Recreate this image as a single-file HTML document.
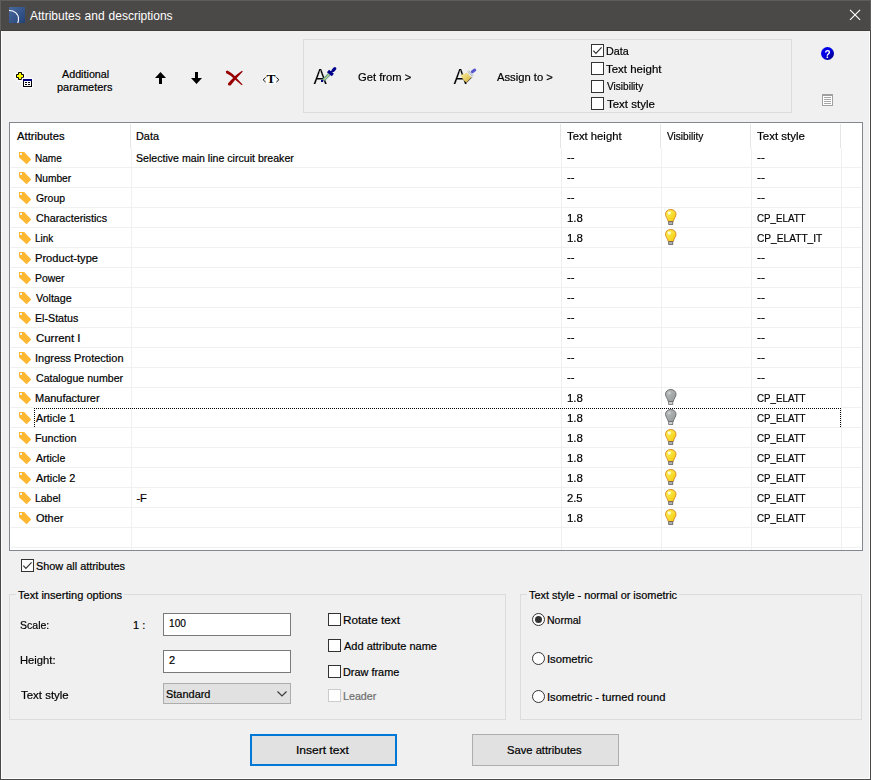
<!DOCTYPE html>
<html><head><meta charset="utf-8"><title>Attributes and descriptions</title>
<style>
html,body{margin:0;padding:0;}
body{width:871px;height:780px;overflow:hidden;background:#f0f0f0;font-family:"Liberation Sans",sans-serif;font-size:11px;color:#000;position:relative;}
.win{position:absolute;left:0;top:0;width:869px;height:778px;border:1px solid #4b4947;background:#f0f0f0;}
.win::after{content:"";position:absolute;left:0;top:0;width:867px;height:776px;border:1px solid #fcfcfc;}
.title{position:absolute;left:0;top:0;width:869px;height:29px;background:#4b4947;border:1px solid #5f5d5b;border-bottom:1px solid #403e3c;}
.title .cap{position:absolute;left:29px;top:7px;word-spacing:0.6px;font-size:12px;line-height:16px;color:#fff;white-space:nowrap;}
.t{position:absolute;white-space:nowrap;line-height:13px;height:13px;transform-origin:0 0;-webkit-text-stroke:0.2px currentColor;}
.gb{position:absolute;border:1px solid #dcdcdc;box-sizing:border-box;}
.lg{position:absolute;background:#f0f0f0;height:13px;}
.cb{position:absolute;width:11px;height:11px;border:1px solid #333;background:#fff;}
.cb.dis{border-color:#ccc;}
.rb{position:absolute;width:11px;height:11px;border:1px solid #333;background:#fff;border-radius:50%;}
.rb.on::after{content:"";position:absolute;left:2px;top:2px;width:7px;height:7px;border-radius:50%;background:#333;}
.list{position:absolute;left:9px;top:122px;width:852px;height:427px;border:1px solid #828790;background:#fff;}
.hl{position:absolute;background:#f0f0f0;}
.hd{position:absolute;background:#e5e5e5;width:1px;top:124px;height:24px;}
.inp{position:absolute;box-sizing:border-box;border:1px solid #7a7a7a;background:#fff;}
.sel{position:absolute;box-sizing:border-box;border:1px solid #adadad;background:#e1e1e1;}
.btn{position:absolute;box-sizing:border-box;background:#e1e1e1;border:1px solid #adadad;}
.btn.def{border:2px solid #0078d7;}
svg{position:absolute;overflow:visible;}
</style></head>
<body>
<div class="win"></div>
<svg width="0" height="0" style="left:0;top:0"><defs><linearGradient id="by" x1="0" y1="0" x2="1" y2="1"><stop offset="0" stop-color="#fff46a"/><stop offset="1" stop-color="#f2c800"/></linearGradient><linearGradient id="bgy" x1="0" y1="0" x2="1" y2="1"><stop offset="0" stop-color="#bcc0c0"/><stop offset="1" stop-color="#939797"/></linearGradient></defs></svg>
<div class="title">
<svg style="left:8px;top:6px" width="16" height="16" viewBox="0 0 16 16"><defs><linearGradient id="ig" x1="0" y1="0" x2="1" y2="1"><stop offset="0" stop-color="#4a6a9e"/><stop offset="1" stop-color="#22427a"/></linearGradient></defs><rect width="16" height="16" fill="url(#ig)"/><path d="M0 3.5 C5 3.3 9.6 6.5 9.5 12 C9.5 14 9.3 15 8.6 16" fill="none" stroke="#fff" stroke-width="1.1"/></svg>
<div class="cap">Attributes and descriptions</div>
<svg style="left:849px;top:9px" width="11" height="11" viewBox="0 0 11 11"><path d="M0 -0.2 L10.1 9.9 M10.1 -0.2 L0 9.9" stroke="#fff" stroke-width="1.15" fill="none"/></svg>
</div>
<svg style="left:15px;top:71px" width="19" height="18" viewBox="0 0 19 18"><path d="M3.5 0.5h3v3h3v3h-3v3h-3v-3h-3v-3h3z" fill="#ff0" stroke="#fafafa" stroke-width="2.4"/><path d="M3.5 1.5h3v2h2v3h-2v2h-3v-2h-2v-3h2z" fill="#ff0" stroke="#000" stroke-width="1"/><rect x="7.5" y="7.5" width="10" height="9" fill="#fff" stroke="#fafafa" stroke-width="1.4"/><rect x="8.5" y="8.5" width="8" height="7" fill="#fff" stroke="#000" stroke-width="1"/><rect x="8" y="8" width="9" height="2" fill="#000080"/><rect x="10" y="11" width="2" height="1" fill="#000"/><rect x="13" y="11" width="2" height="1" fill="#000"/><rect x="10" y="13" width="2" height="1" fill="#000"/><rect x="13" y="13" width="2" height="1" fill="#000"/></svg>
<div class="t " id="t0" style="left:62.11px;top:68px;transform:scaleX(0.977);">Additional</div>
<div class="t " id="t1" style="left:56.95px;top:81px;transform:scaleX(0.9956);">parameters</div>
<svg style="left:155px;top:72px" width="11" height="12" viewBox="0 0 11 12"><path d="M5.5 0 L11 6 H7 V12 H4 V6 H0 Z" fill="#000"/></svg>
<svg style="left:191px;top:72px" width="11" height="12" viewBox="0 0 11 12"><path d="M5.5 12 L11 6 H7 V0 H4 V6 H0 Z" fill="#000"/></svg>
<svg style="left:226px;top:71px" width="17" height="15" viewBox="0 0 17 15"><path d="M-0.2 0.3 L1.4 -0.4 C4.8 1.4 7.6 3.6 9.8 6.2 L16.6 13.4 L15.8 14.3 L8.6 8.2 C6 5.6 3.5 3.6 0.2 2.2 Z" fill="#990000"/><path d="M16 -0.2 L16.8 0.6 C13.4 4.2 10 7.8 7.2 11.2 L5 14 C3.8 15.2 1.4 14.6 2 12.6 L4.6 9.6 C8 6 11.6 2.6 16 -0.2 Z" fill="#990000"/></svg>
<svg style="left:262px;top:70px" width="18" height="16" viewBox="0 0 18 16"><rect x="4" y="3" width="10" height="11" rx="1.5" fill="#fff"/><text x="9" y="13" text-anchor="middle" font-family="Liberation Serif,serif" font-weight="bold" font-size="13.5" fill="#000">T</text><path d="M3.6 7.4 L1.1 9.75 L3.6 12.1 M14.4 7.4 L16.9 9.75 L14.4 12.1" stroke="#000" stroke-width="0.9" fill="none"/></svg>
<div class="gb" style="left:303px;top:39px;width:489px;height:74px"></div>
<svg style="left:312px;top:64px" width="28" height="24" viewBox="0 0 28 24"><text x="1.4" y="20" font-family="Liberation Sans,sans-serif" font-size="22" fill="#000" stroke="#f0f0f0" stroke-width="0.15" textLength="13.4" lengthAdjust="spacingAndGlyphs" style="will-change:transform">A</text><path d="M17.2 10.3 L11.6 15.9" stroke="#5f9a9a" stroke-width="3.2"/><path d="M16.8 10.7 L11.8 15.7" stroke="#ffff70" stroke-width="1.1" stroke-dasharray="1 0.5"/><rect x="9" y="16" width="2.2" height="2" fill="#000080"/><path d="M16 7 L20.8 11" stroke="#00008b" stroke-width="3.4"/><path d="M18.5 9 L20.5 7" stroke="#00008b" stroke-width="1.8"/><path d="M21.2 6.3 L22.8 4.7" stroke="#00008b" stroke-width="3.1" stroke-linecap="round"/></svg>
<div class="t " id="t2" style="left:358.24px;top:71px;transform:scaleX(1.018);">Get from &gt;</div>
<svg style="left:452px;top:64px" width="28" height="24" viewBox="0 0 28 24"><text x="1.4" y="20" font-family="Liberation Sans,sans-serif" font-size="22" fill="#000" stroke="#f0f0f0" stroke-width="0.15" textLength="13.4" lengthAdjust="spacingAndGlyphs" style="will-change:transform">A</text><defs><linearGradient id="bg1" x1="0" y1="0" x2="1" y2="1"><stop offset="0" stop-color="#faefb0"/><stop offset="0.6" stop-color="#e6cd62"/><stop offset="1" stop-color="#b8952c"/></linearGradient></defs><path d="M8 11.3 L10.2 10.9 L10.8 9.6 L12.6 9.9 L14.6 8.2 L19.6 13.4 L14.4 18.5 L12 16.4 L9.8 13.6 Z" fill="url(#bg1)"/><path d="M14.6 8.2 L17.2 6 L21.8 10.8 L19.6 13.4 Z" fill="#e4e7ee"/><path d="M15.6 7.4 L20.4 12.4 M16.6 6.6 L21.2 11.5" stroke="#8f96a3" stroke-width="0.6"/><path d="M20.4 7.7 L22.7 6.1" stroke="#5757d0" stroke-width="3.1" stroke-linecap="round"/><path d="M19.8 13.4 L14.5 18.7" stroke="#4a4436" stroke-width="0.9"/></svg>
<div class="t " id="t3" style="left:496.59px;top:71px;transform:scaleX(1.0219);">Assign to &gt;</div>
<div class="cb" style="left:591px;top:44px"></div>
<svg style="left:591px;top:44px" width="13" height="13" viewBox="0 0 13 13"><path d="M2.3 6.6 L4.9 9.3 L10.6 3.4" stroke="#333" stroke-width="1.2" fill="none"/></svg>
<div class="t " id="t4" style="left:606.3px;top:45px;transform:scaleX(0.9772);">Data</div>
<div class="cb" style="left:591px;top:62px"></div>
<div class="t " id="t5" style="left:606.41px;top:63px;transform:scaleX(1.0424);">Text height</div>
<div class="cb" style="left:591px;top:80px"></div>
<div class="t " id="t6" style="left:607.47px;top:80px;transform:scaleX(0.9155);">Visibility</div>
<div class="cb" style="left:591px;top:97px"></div>
<div class="t " id="t7" style="left:607.41px;top:98px;transform:scaleX(1.0433);">Text style</div>
<svg style="left:821px;top:47px" width="13" height="13" viewBox="0 0 13 13"><defs><linearGradient id="hg" x1="0" y1="0" x2="1" y2="1"><stop offset="0.45" stop-color="#0000e8"/><stop offset="1" stop-color="#000070"/></linearGradient></defs><circle cx="6.5" cy="6.5" r="6.5" fill="url(#hg)"/><text x="6.6" y="10.5" text-anchor="middle" font-family="Liberation Sans,sans-serif" font-weight="bold" font-size="10" fill="#fff" style="will-change:transform">?</text></svg>
<svg style="left:822px;top:94px" width="11" height="12" viewBox="0 0 11 12"><rect x="0.5" y="0.5" width="10" height="11" fill="#fff" stroke="#a0a0a0"/><rect x="0" y="0" width="11" height="2" fill="#a0a0a0"/><path d="M2 3.5h7M2 5.5h7M2 7.5h7M2 9.5h7" stroke="#a8a8a8" stroke-width="1"/></svg>
<div class="list"></div>
<div class="hl" style="left:131px;top:148px;width:1px;height:402px"></div>
<div class="hl" style="left:561px;top:148px;width:1px;height:402px"></div>
<div class="hl" style="left:661px;top:148px;width:1px;height:402px"></div>
<div class="hl" style="left:751px;top:148px;width:1px;height:402px"></div>
<div class="hl" style="left:841px;top:148px;width:1px;height:402px"></div>
<div class="hd" style="left:130px"></div>
<div class="hd" style="left:560px"></div>
<div class="hd" style="left:660px"></div>
<div class="hd" style="left:750px"></div>
<div class="hd" style="left:840px"></div>
<div class="hl" style="left:11px;top:167px;width:850px;height:1px"></div>
<div class="hl" style="left:11px;top:187px;width:850px;height:1px"></div>
<div class="hl" style="left:11px;top:207px;width:850px;height:1px"></div>
<div class="hl" style="left:11px;top:227px;width:850px;height:1px"></div>
<div class="hl" style="left:11px;top:247px;width:850px;height:1px"></div>
<div class="hl" style="left:11px;top:267px;width:850px;height:1px"></div>
<div class="hl" style="left:11px;top:287px;width:850px;height:1px"></div>
<div class="hl" style="left:11px;top:307px;width:850px;height:1px"></div>
<div class="hl" style="left:11px;top:327px;width:850px;height:1px"></div>
<div class="hl" style="left:11px;top:347px;width:850px;height:1px"></div>
<div class="hl" style="left:11px;top:367px;width:850px;height:1px"></div>
<div class="hl" style="left:11px;top:387px;width:850px;height:1px"></div>
<div class="hl" style="left:11px;top:407px;width:850px;height:1px"></div>
<div class="hl" style="left:11px;top:427px;width:850px;height:1px"></div>
<div class="hl" style="left:11px;top:447px;width:850px;height:1px"></div>
<div class="hl" style="left:11px;top:467px;width:850px;height:1px"></div>
<div class="hl" style="left:11px;top:487px;width:850px;height:1px"></div>
<div class="hl" style="left:11px;top:507px;width:850px;height:1px"></div>
<div class="hl" style="left:11px;top:527px;width:850px;height:1px"></div>
<div class="hl" style="left:11px;top:547px;width:850px;height:1px"></div>
<div class="t " id="t8" style="left:16.56px;top:130px;transform:scaleX(1.0224);">Attributes</div>
<div class="t " id="t9" style="left:135.96px;top:130px;transform:scaleX(0.9872);">Data</div>
<div class="t " id="t10" style="left:566.87px;top:130px;transform:scaleX(1.0255);">Text height</div>
<div class="t " id="t11" style="left:667.46px;top:130px;transform:scaleX(0.9181);">Visibility</div>
<div class="t " id="t12" style="left:757.47px;top:130px;transform:scaleX(1.0453);">Text style</div>
<svg style="left:19px;top:152px" width="13" height="13" viewBox="0 0 13 13"><path d="M0 0 L5.2 0 L12.2 7.4 L7.6 12.2 L0 5.2 Z" fill="#fdb730"/><rect x="1" y="1" width="2" height="2" fill="#eef3fb"/></svg>
<div class="t " id="t13" style="left:35.48px;top:152px;transform:scaleX(0.9118);">Name</div>
<div class="t " id="t14" style="left:136.23px;top:152px;transform:scaleX(0.9633);">Selective main line circuit breaker</div>
<div class="t " id="t15" style="left:567.16px;top:151px;transform:scaleX(1.0315);">--</div>
<div class="t " id="t16" style="left:757.35px;top:151px;transform:scaleX(1.0619);">--</div>
<svg style="left:19px;top:172px" width="13" height="13" viewBox="0 0 13 13"><path d="M0 0 L5.2 0 L12.2 7.4 L7.6 12.2 L0 5.2 Z" fill="#fdb730"/><rect x="1" y="1" width="2" height="2" fill="#eef3fb"/></svg>
<div class="t " id="t17" style="left:35.41px;top:172px;transform:scaleX(0.9244);">Number</div>
<div class="t " id="t18" style="left:567.16px;top:171px;transform:scaleX(1.03);">--</div>
<div class="t " id="t19" style="left:756.79px;top:171px;transform:scaleX(1.0811);">--</div>
<svg style="left:19px;top:192px" width="13" height="13" viewBox="0 0 13 13"><path d="M0 0 L5.2 0 L12.2 7.4 L7.6 12.2 L0 5.2 Z" fill="#fdb730"/><rect x="1" y="1" width="2" height="2" fill="#eef3fb"/></svg>
<div class="t " id="t20" style="left:35.67px;top:192px;transform:scaleX(0.9482);">Group</div>
<div class="t " id="t21" style="left:567.16px;top:191px;transform:scaleX(1.03);">--</div>
<div class="t " id="t22" style="left:756.79px;top:191px;transform:scaleX(1.0811);">--</div>
<svg style="left:19px;top:212px" width="13" height="13" viewBox="0 0 13 13"><path d="M0 0 L5.2 0 L12.2 7.4 L7.6 12.2 L0 5.2 Z" fill="#fdb730"/><rect x="1" y="1" width="2" height="2" fill="#eef3fb"/></svg>
<div class="t " id="t23" style="left:35.67px;top:212px;transform:scaleX(0.9777);">Characteristics</div>
<div class="t " id="t24" style="left:567.48px;top:212px;transform:scaleX(1.0399);">1.8</div>
<svg style="left:665px;top:209px" width="12" height="16" viewBox="0 0 12 16"><path d="M5.75 0.5 C2.5 0.5 0.5 2.8 0.5 5.3 C0.5 7.5 2.6 9.5 3.3 12.5 L8.2 12.5 C8.9 9.5 11 7.5 11 5.3 C11 2.8 9 0.5 5.75 0.5 Z" fill="url(#by)" stroke="#e08a1e" stroke-width="1"/><circle cx="4.3" cy="4" r="1.6" fill="#fffbe0"/><rect x="3.7" y="12.7" width="4.1" height="2.7" fill="#b4b4b4" stroke="#5a5a5a" stroke-width="0.8"/></svg>
<div class="t " id="t25" style="left:757.29px;top:212px;transform:scaleX(0.8859);">CP_ELATT</div>
<svg style="left:19px;top:232px" width="13" height="13" viewBox="0 0 13 13"><path d="M0 0 L5.2 0 L12.2 7.4 L7.6 12.2 L0 5.2 Z" fill="#fdb730"/><rect x="1" y="1" width="2" height="2" fill="#eef3fb"/></svg>
<div class="t " id="t26" style="left:34.6px;top:232px;transform:scaleX(0.9003);">Link</div>
<div class="t " id="t27" style="left:567.48px;top:232px;transform:scaleX(1.0399);">1.8</div>
<svg style="left:665px;top:229px" width="12" height="16" viewBox="0 0 12 16"><path d="M5.75 0.5 C2.5 0.5 0.5 2.8 0.5 5.3 C0.5 7.5 2.6 9.5 3.3 12.5 L8.2 12.5 C8.9 9.5 11 7.5 11 5.3 C11 2.8 9 0.5 5.75 0.5 Z" fill="url(#by)" stroke="#e08a1e" stroke-width="1"/><circle cx="4.3" cy="4" r="1.6" fill="#fffbe0"/><rect x="3.7" y="12.7" width="4.1" height="2.7" fill="#b4b4b4" stroke="#5a5a5a" stroke-width="0.8"/></svg>
<div class="t " id="t28" style="left:756.72px;top:232px;transform:scaleX(0.9233);">CP_ELATT_IT</div>
<svg style="left:19px;top:252px" width="13" height="13" viewBox="0 0 13 13"><path d="M0 0 L5.2 0 L12.2 7.4 L7.6 12.2 L0 5.2 Z" fill="#fdb730"/><rect x="1" y="1" width="2" height="2" fill="#eef3fb"/></svg>
<div class="t " id="t29" style="left:34.62px;top:252px;transform:scaleX(1.0109);">Product-type</div>
<div class="t " id="t30" style="left:567.16px;top:251px;transform:scaleX(1.03);">--</div>
<div class="t " id="t31" style="left:756.79px;top:251px;transform:scaleX(1.0811);">--</div>
<svg style="left:19px;top:272px" width="13" height="13" viewBox="0 0 13 13"><path d="M0 0 L5.2 0 L12.2 7.4 L7.6 12.2 L0 5.2 Z" fill="#fdb730"/><rect x="1" y="1" width="2" height="2" fill="#eef3fb"/></svg>
<div class="t " id="t32" style="left:35.27px;top:272px;transform:scaleX(0.9454);">Power</div>
<div class="t " id="t33" style="left:567.16px;top:271px;transform:scaleX(1.03);">--</div>
<div class="t " id="t34" style="left:756.79px;top:271px;transform:scaleX(1.0811);">--</div>
<svg style="left:19px;top:292px" width="13" height="13" viewBox="0 0 13 13"><path d="M0 0 L5.2 0 L12.2 7.4 L7.6 12.2 L0 5.2 Z" fill="#fdb730"/><rect x="1" y="1" width="2" height="2" fill="#eef3fb"/></svg>
<div class="t " id="t35" style="left:36.49px;top:292px;transform:scaleX(0.9741);">Voltage</div>
<div class="t " id="t36" style="left:567.16px;top:291px;transform:scaleX(1.03);">--</div>
<div class="t " id="t37" style="left:756.79px;top:291px;transform:scaleX(1.0811);">--</div>
<svg style="left:19px;top:312px" width="13" height="13" viewBox="0 0 13 13"><path d="M0 0 L5.2 0 L12.2 7.4 L7.6 12.2 L0 5.2 Z" fill="#fdb730"/><rect x="1" y="1" width="2" height="2" fill="#eef3fb"/></svg>
<div class="t " id="t38" style="left:35.25px;top:312px;transform:scaleX(0.9697);">El-Status</div>
<div class="t " id="t39" style="left:567.16px;top:311px;transform:scaleX(1.03);">--</div>
<div class="t " id="t40" style="left:756.79px;top:311px;transform:scaleX(1.0811);">--</div>
<svg style="left:19px;top:332px" width="13" height="13" viewBox="0 0 13 13"><path d="M0 0 L5.2 0 L12.2 7.4 L7.6 12.2 L0 5.2 Z" fill="#fdb730"/><rect x="1" y="1" width="2" height="2" fill="#eef3fb"/></svg>
<div class="t " id="t41" style="left:35.61px;top:332px;transform:scaleX(1.0388);">Current I</div>
<div class="t " id="t42" style="left:567.16px;top:331px;transform:scaleX(1.03);">--</div>
<div class="t " id="t43" style="left:756.79px;top:331px;transform:scaleX(1.0811);">--</div>
<svg style="left:19px;top:352px" width="13" height="13" viewBox="0 0 13 13"><path d="M0 0 L5.2 0 L12.2 7.4 L7.6 12.2 L0 5.2 Z" fill="#fdb730"/><rect x="1" y="1" width="2" height="2" fill="#eef3fb"/></svg>
<div class="t " id="t44" style="left:35.34px;top:352px;transform:scaleX(0.9984);">Ingress Protection</div>
<div class="t " id="t45" style="left:567.16px;top:351px;transform:scaleX(1.03);">--</div>
<div class="t " id="t46" style="left:756.79px;top:351px;transform:scaleX(1.0811);">--</div>
<svg style="left:19px;top:372px" width="13" height="13" viewBox="0 0 13 13"><path d="M0 0 L5.2 0 L12.2 7.4 L7.6 12.2 L0 5.2 Z" fill="#fdb730"/><rect x="1" y="1" width="2" height="2" fill="#eef3fb"/></svg>
<div class="t " id="t47" style="left:35.75px;top:372px;transform:scaleX(0.962);">Catalogue number</div>
<div class="t " id="t48" style="left:567.16px;top:371px;transform:scaleX(1.03);">--</div>
<div class="t " id="t49" style="left:756.79px;top:371px;transform:scaleX(1.0811);">--</div>
<svg style="left:19px;top:392px" width="13" height="13" viewBox="0 0 13 13"><path d="M0 0 L5.2 0 L12.2 7.4 L7.6 12.2 L0 5.2 Z" fill="#fdb730"/><rect x="1" y="1" width="2" height="2" fill="#eef3fb"/></svg>
<div class="t " id="t50" style="left:35.26px;top:392px;transform:scaleX(0.9964);">Manufacturer</div>
<div class="t " id="t51" style="left:567.48px;top:392px;transform:scaleX(1.0399);">1.8</div>
<svg style="left:665px;top:389px" width="12" height="16" viewBox="0 0 12 16"><path d="M5.75 0.5 C2.5 0.5 0.5 2.8 0.5 5.3 C0.5 7.5 2.6 9.5 3.3 12.5 L8.2 12.5 C8.9 9.5 11 7.5 11 5.3 C11 2.8 9 0.5 5.75 0.5 Z" fill="url(#bgy)" stroke="#6a6e6e" stroke-width="1"/><circle cx="4.3" cy="4" r="1.6" fill="#c8cccc"/><rect x="3.7" y="12.7" width="4.1" height="2.7" fill="#d4d4d4" stroke="#666" stroke-width="0.8"/></svg>
<div class="t " id="t52" style="left:757.29px;top:392px;transform:scaleX(0.8859);">CP_ELATT</div>
<svg style="left:19px;top:412px" width="13" height="13" viewBox="0 0 13 13"><path d="M0 0 L5.2 0 L12.2 7.4 L7.6 12.2 L0 5.2 Z" fill="#fdb730"/><rect x="1" y="1" width="2" height="2" fill="#eef3fb"/></svg>
<div class="t " id="t53" style="left:35.56px;top:412px;transform:scaleX(0.9782);">Article 1</div>
<div class="t " id="t54" style="left:567.48px;top:412px;transform:scaleX(1.0399);">1.8</div>
<svg style="left:665px;top:409px" width="12" height="16" viewBox="0 0 12 16"><path d="M5.75 0.5 C2.5 0.5 0.5 2.8 0.5 5.3 C0.5 7.5 2.6 9.5 3.3 12.5 L8.2 12.5 C8.9 9.5 11 7.5 11 5.3 C11 2.8 9 0.5 5.75 0.5 Z" fill="url(#bgy)" stroke="#6a6e6e" stroke-width="1"/><circle cx="4.3" cy="4" r="1.6" fill="#c8cccc"/><rect x="3.7" y="12.7" width="4.1" height="2.7" fill="#d4d4d4" stroke="#666" stroke-width="0.8"/></svg>
<div class="t " id="t55" style="left:757.29px;top:412px;transform:scaleX(0.8859);">CP_ELATT</div>
<svg style="left:19px;top:432px" width="13" height="13" viewBox="0 0 13 13"><path d="M0 0 L5.2 0 L12.2 7.4 L7.6 12.2 L0 5.2 Z" fill="#fdb730"/><rect x="1" y="1" width="2" height="2" fill="#eef3fb"/></svg>
<div class="t " id="t56" style="left:35.19px;top:432px;transform:scaleX(0.9824);">Function</div>
<div class="t " id="t57" style="left:567.48px;top:432px;transform:scaleX(1.0399);">1.8</div>
<svg style="left:665px;top:429px" width="12" height="16" viewBox="0 0 12 16"><path d="M5.75 0.5 C2.5 0.5 0.5 2.8 0.5 5.3 C0.5 7.5 2.6 9.5 3.3 12.5 L8.2 12.5 C8.9 9.5 11 7.5 11 5.3 C11 2.8 9 0.5 5.75 0.5 Z" fill="url(#by)" stroke="#e08a1e" stroke-width="1"/><circle cx="4.3" cy="4" r="1.6" fill="#fffbe0"/><rect x="3.7" y="12.7" width="4.1" height="2.7" fill="#b4b4b4" stroke="#5a5a5a" stroke-width="0.8"/></svg>
<div class="t " id="t58" style="left:757.29px;top:432px;transform:scaleX(0.8859);">CP_ELATT</div>
<svg style="left:19px;top:452px" width="13" height="13" viewBox="0 0 13 13"><path d="M0 0 L5.2 0 L12.2 7.4 L7.6 12.2 L0 5.2 Z" fill="#fdb730"/><rect x="1" y="1" width="2" height="2" fill="#eef3fb"/></svg>
<div class="t " id="t59" style="left:35.56px;top:452px;transform:scaleX(0.9597);">Article</div>
<div class="t " id="t60" style="left:567.48px;top:452px;transform:scaleX(1.0399);">1.8</div>
<svg style="left:665px;top:449px" width="12" height="16" viewBox="0 0 12 16"><path d="M5.75 0.5 C2.5 0.5 0.5 2.8 0.5 5.3 C0.5 7.5 2.6 9.5 3.3 12.5 L8.2 12.5 C8.9 9.5 11 7.5 11 5.3 C11 2.8 9 0.5 5.75 0.5 Z" fill="url(#by)" stroke="#e08a1e" stroke-width="1"/><circle cx="4.3" cy="4" r="1.6" fill="#fffbe0"/><rect x="3.7" y="12.7" width="4.1" height="2.7" fill="#b4b4b4" stroke="#5a5a5a" stroke-width="0.8"/></svg>
<div class="t " id="t61" style="left:757.29px;top:452px;transform:scaleX(0.8859);">CP_ELATT</div>
<svg style="left:19px;top:472px" width="13" height="13" viewBox="0 0 13 13"><path d="M0 0 L5.2 0 L12.2 7.4 L7.6 12.2 L0 5.2 Z" fill="#fdb730"/><rect x="1" y="1" width="2" height="2" fill="#eef3fb"/></svg>
<div class="t " id="t62" style="left:35.56px;top:472px;transform:scaleX(0.9861);">Article 2</div>
<div class="t " id="t63" style="left:567.48px;top:472px;transform:scaleX(1.0399);">1.8</div>
<svg style="left:665px;top:469px" width="12" height="16" viewBox="0 0 12 16"><path d="M5.75 0.5 C2.5 0.5 0.5 2.8 0.5 5.3 C0.5 7.5 2.6 9.5 3.3 12.5 L8.2 12.5 C8.9 9.5 11 7.5 11 5.3 C11 2.8 9 0.5 5.75 0.5 Z" fill="url(#by)" stroke="#e08a1e" stroke-width="1"/><circle cx="4.3" cy="4" r="1.6" fill="#fffbe0"/><rect x="3.7" y="12.7" width="4.1" height="2.7" fill="#b4b4b4" stroke="#5a5a5a" stroke-width="0.8"/></svg>
<div class="t " id="t64" style="left:757.29px;top:472px;transform:scaleX(0.8859);">CP_ELATT</div>
<svg style="left:19px;top:492px" width="13" height="13" viewBox="0 0 13 13"><path d="M0 0 L5.2 0 L12.2 7.4 L7.6 12.2 L0 5.2 Z" fill="#fdb730"/><rect x="1" y="1" width="2" height="2" fill="#eef3fb"/></svg>
<div class="t " id="t65" style="left:35.39px;top:492px;transform:scaleX(0.9485);">Label</div>
<div class="t " id="t66" style="left:136.41px;top:492px;">-F</div>
<div class="t " id="t67" style="left:566.96px;top:492px;transform:scaleX(1.021);">2.5</div>
<svg style="left:665px;top:489px" width="12" height="16" viewBox="0 0 12 16"><path d="M5.75 0.5 C2.5 0.5 0.5 2.8 0.5 5.3 C0.5 7.5 2.6 9.5 3.3 12.5 L8.2 12.5 C8.9 9.5 11 7.5 11 5.3 C11 2.8 9 0.5 5.75 0.5 Z" fill="url(#by)" stroke="#e08a1e" stroke-width="1"/><circle cx="4.3" cy="4" r="1.6" fill="#fffbe0"/><rect x="3.7" y="12.7" width="4.1" height="2.7" fill="#b4b4b4" stroke="#5a5a5a" stroke-width="0.8"/></svg>
<div class="t " id="t68" style="left:757.29px;top:492px;transform:scaleX(0.8859);">CP_ELATT</div>
<svg style="left:19px;top:512px" width="13" height="13" viewBox="0 0 13 13"><path d="M0 0 L5.2 0 L12.2 7.4 L7.6 12.2 L0 5.2 Z" fill="#fdb730"/><rect x="1" y="1" width="2" height="2" fill="#eef3fb"/></svg>
<div class="t " id="t69" style="left:36.37px;top:512px;transform:scaleX(1.0004);">Other</div>
<div class="t " id="t70" style="left:567.48px;top:512px;transform:scaleX(1.0399);">1.8</div>
<svg style="left:665px;top:509px" width="12" height="16" viewBox="0 0 12 16"><path d="M5.75 0.5 C2.5 0.5 0.5 2.8 0.5 5.3 C0.5 7.5 2.6 9.5 3.3 12.5 L8.2 12.5 C8.9 9.5 11 7.5 11 5.3 C11 2.8 9 0.5 5.75 0.5 Z" fill="url(#by)" stroke="#e08a1e" stroke-width="1"/><circle cx="4.3" cy="4" r="1.6" fill="#fffbe0"/><rect x="3.7" y="12.7" width="4.1" height="2.7" fill="#b4b4b4" stroke="#5a5a5a" stroke-width="0.8"/></svg>
<div class="t " id="t71" style="left:757.29px;top:512px;transform:scaleX(0.8859);">CP_ELATT</div>
<div style="position:absolute;left:34px;top:407px;width:807px;height:1px;background:#fff"></div>
<div style="position:absolute;left:34px;top:408px;width:807px;height:0;border-top:1px dotted #000"></div>
<div style="position:absolute;left:34px;top:408px;width:0;height:19px;border-left:1px dotted #000"></div>
<div style="position:absolute;left:840px;top:408px;width:0;height:19px;border-left:1px dotted #000"></div>
<div class="cb" style="left:21px;top:559px"></div>
<svg style="left:21px;top:559px" width="13" height="13" viewBox="0 0 13 13"><path d="M2.3 6.6 L4.9 9.3 L10.6 3.4" stroke="#333" stroke-width="1.2" fill="none"/></svg>
<div class="t " id="t72" style="left:35.52px;top:560px;transform:scaleX(0.9891);">Show all attributes</div>
<div class="gb" style="left:9px;top:594px;width:497px;height:126px"></div>
<div class="lg" style="left:16px;top:588px;width:108px"></div>
<div class="t " id="t73" style="left:17.73px;top:589px;transform:scaleX(1.0076);">Text inserting options</div>
<div class="t " id="t74" style="left:19.8px;top:619px;transform:scaleX(0.9563);">Scale:</div>
<div class="t " id="t75" style="left:132.91px;top:619px;transform:scaleX(0.9972);">1 :</div>
<div class="t " id="t76" style="left:19.68px;top:654px;transform:scaleX(1.0188);">Height:</div>
<div class="t " id="t77" style="left:20.81px;top:689px;transform:scaleX(1.0401);">Text style</div>
<div class="inp" style="left:163px;top:613px;width:128px;height:23px"></div>
<div class="t " id="t78" style="left:169.47px;top:617px;transform:scaleX(0.9231);">100</div>
<div class="inp" style="left:163px;top:650px;width:128px;height:23px"></div>
<div class="t " id="t79" style="left:169.09px;top:654px;">2</div>
<div class="sel" style="left:163px;top:683px;width:128px;height:21px"></div>
<div class="t " id="t80" style="left:165.62px;top:688px;transform:scaleX(0.9959);">Standard</div>
<svg style="left:277px;top:691px" width="10" height="6" viewBox="0 0 10 6"><path d="M0.5 0.5 L5 5 L9.5 0.5" stroke="#3a3a3a" stroke-width="1.2" fill="none"/></svg>
<div class="cb" style="left:328px;top:613px"></div>
<div class="t " id="t81" style="left:342.63px;top:614px;transform:scaleX(1.0701);">Rotate text</div>
<div class="cb" style="left:328px;top:639px"></div>
<div class="t " id="t82" style="left:343.71px;top:640px;transform:scaleX(1.0001);">Add attribute name</div>
<div class="cb" style="left:328px;top:665px"></div>
<div class="t " id="t83" style="left:342.91px;top:666px;transform:scaleX(0.9898);">Draw frame</div>
<div class="cb dis" style="left:328px;top:689px"></div>
<div class="t " id="t84" style="left:342.92px;top:690px;transform:scaleX(0.9731);color:#6d6d6d">Leader</div>
<div class="gb" style="left:520px;top:594px;width:342px;height:126px"></div>
<div class="lg" style="left:527px;top:588px;width:152px"></div>
<div class="t " id="t85" style="left:529.12px;top:589px;transform:scaleX(0.9927);">Text style - normal or isometric</div>
<div class="rb on" style="left:532px;top:613px"></div>
<div class="t " id="t86" style="left:546.59px;top:614px;transform:scaleX(0.9542);">Normal</div>
<div class="rb" style="left:532px;top:652px"></div>
<div class="t " id="t87" style="left:546.59px;top:653px;transform:scaleX(1.0207);">Isometric</div>
<div class="rb" style="left:532px;top:690px"></div>
<div class="t " id="t88" style="left:546.58px;top:691px;transform:scaleX(1.0133);">Isometric - turned round</div>
<div class="btn def" style="left:250px;top:734px;width:147px;height:32px"></div>
<div class="t " id="t89" style="left:295.85px;top:744px;transform:scaleX(1.0964);">Insert text</div>
<div class="btn" style="left:472px;top:734px;width:147px;height:32px"></div>
<div class="t " id="t90" style="left:506.72px;top:744px;transform:scaleX(1.018);">Save attributes</div>
</body></html>
